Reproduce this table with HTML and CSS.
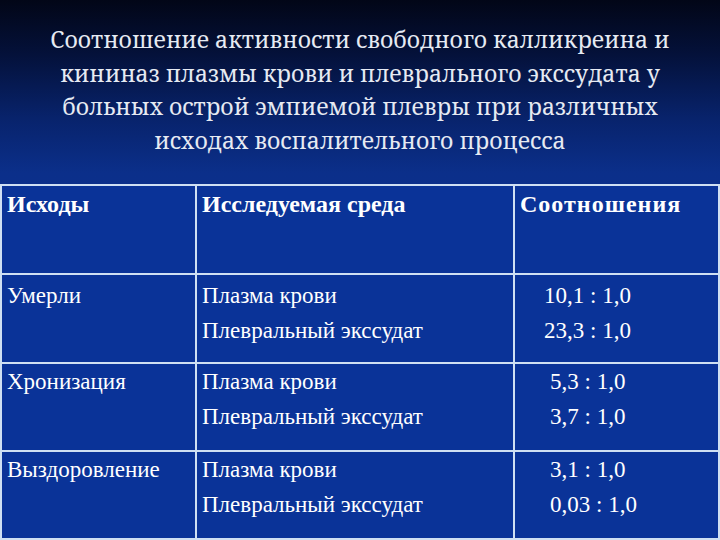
FILE: index.html
```html
<!DOCTYPE html>
<html>
<head>
<meta charset="utf-8">
<link rel="stylesheet" href="styles.css">
</head>
<body>
<div class="slide">
  <h1 class="title">Соотношение активности свободного калликреина и<br>кининаз плазмы крови и плеврального экссудата у<br>больных острой эмпиемой плевры при различных<br>исходах воспалительного процесса</h1>
  <table class="data">
    <colgroup><col class="c1"><col class="c2"><col class="c3"></colgroup>
    <tr class="head">
      <th>Исходы</th>
      <th>Исследуемая среда</th>
      <th class="wide">Соотношения</th>
    </tr>
    <tr class="r1">
      <td>Умерли</td>
      <td><div>Плазма крови</div><div>Плевральный экссудат</div></td>
      <td class="val"><div>10,1 : 1,0</div><div>23,3 : 1,0</div></td>
    </tr>
    <tr class="r2">
      <td class="up">Хронизация</td>
      <td class="up"><div>Плазма крови</div><div>Плевральный экссудат</div></td>
      <td class="val up in"><div>5,3 : 1,0</div><div>3,7 : 1,0</div></td>
    </tr>
    <tr class="r3">
      <td class="up">Выздоровление</td>
      <td class="up"><div>Плазма крови</div><div>Плевральный экссудат</div></td>
      <td class="val up in"><div>3,1 : 1,0</div><div>0,03 : 1,0</div></td>
    </tr>
  </table>
</div>
</body>
</html>
```
FILE: styles.css
```css
html, body {
  margin: 0;
  padding: 0;
  background: #0a2f8e;
}
.slide {
  width: 720px;
  height: 540px;
  overflow: hidden;
  background: linear-gradient(to bottom, #020617 0%, #04113a 10%, #08236c 22%, #0b2f8a 32%, #0a3396 100%);
  font-family: "Liberation Serif", "Times New Roman", Times, serif;
  color: #ffffff;
}
.title {
  margin: 0;
  padding: 23px 0 0 0;
  height: 161px;
  box-sizing: border-box;
  text-align: center;
  font-family: "Noto Serif", "FreeSerif", "PT Serif", "DejaVu Serif", serif;
  font-weight: normal;
  font-size: 23px;
  line-height: 33.5px;
  color: #e6eaf2;
}
.data {
  border-collapse: collapse;
  width: 718px;
  margin-top: 23px;
  table-layout: fixed;
  background: #0a3398;
}
.c1 { width: 195px; }
.c2 { width: 318px; }
.c3 { width: 205px; }
.data th, .data td {
  border: 2px solid #cfe0f3;
  vertical-align: top;
  text-align: left;
  font-size: 23px;
  line-height: 35px;
  padding: 3px 6px 0 5px;
  box-sizing: border-box;
}
.head th, .r1 td { height: 89px; }
.r2 td, .r3 td { height: 88px; }
.data th {
  font-weight: bold;
  font-size: 24px;
  padding-top: 1px;
}
.data th.wide { letter-spacing: 1px; }
.data td { padding-top: 3px; }
.data td.up { padding-top: 0; }
.data td.val { padding-left: 29px; }
.data td.val.in { padding-left: 35px; }
```
